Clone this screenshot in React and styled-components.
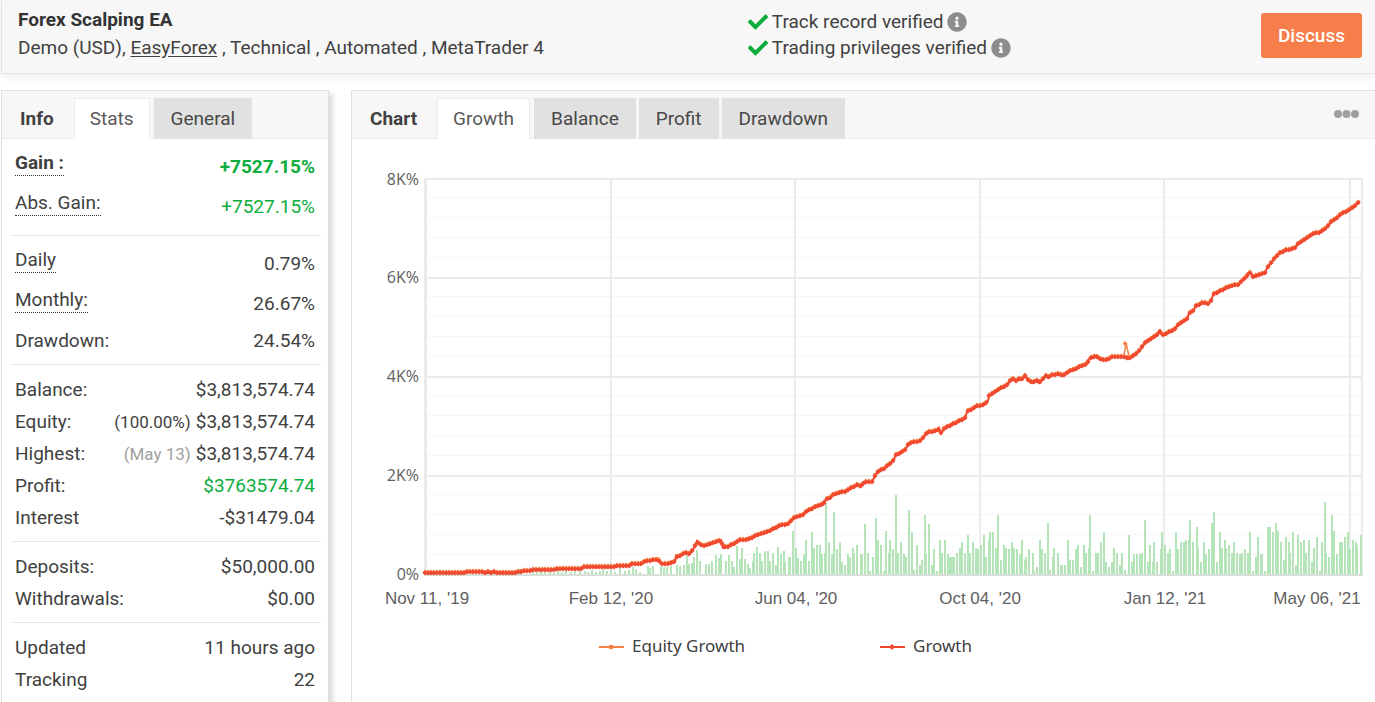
import React, { useState } from "react";
import styled, { createGlobalStyle } from "styled-components";
import { FaCheck, FaInfoCircle } from "react-icons/fa";

const GlobalStyle = createGlobalStyle`
* {
    box-sizing: border-box;
}
body {
    margin: 0;
    background: #fff;
    color: #414141;
    font-family: Roboto, sans-serif;
    font-size: 19px;
    line-height: 24px;
}
`

const Page = styled('div')`
height: 100vh;
padding-left: 1px;
overflow: hidden;
`

const Header = styled('header')`
display: grid;
grid-template-columns: 54.3% 1fr auto;
align-items: start;
height: 74px;
padding: 8px 13px 0 16px;
background: #f7f7f7;
border-left: 1px solid #e4e4e4;
border-bottom: 1px solid #e4e4e4;
box-shadow: 0 3px 8px rgba(0, 0, 0, 0.08);
`

const Title = styled('h1')`
margin: 0 0 4px;
font-size: 19px;
font-weight: 700;
line-height: 24px;
color: #333;
`

const Details = styled('p')`
margin: 0;
a {
    color: inherit;
    text-underline-offset: 2px;
}
`

const Verified = styled('ul')`
list-style: none;
margin: 0;
padding: 1px 0 0;
`

const VerifiedItem = styled('li')`
display: flex;
align-items: center;
gap: 4px;
height: 26px;
.check {
    color: #0cad3d;
}
.info {
    color: #8d8d8d;
}
`

const Discuss = styled('button')`
height: 45px;
margin-top: 5px;
padding: 0 17px;
border: 0;
border-radius: 3px;
background: #f77d4a;
color: #fff;
font: 500 19px Roboto, sans-serif;
`

const Columns = styled('main')`
display: grid;
grid-template-columns: 328px 1fr;
gap: 22px;
padding-top: 16px;
`

const Panel = styled('section')`
min-width: 0;
background: #fff;
border: 1px solid #e0e0e0;
border-right-width: ${props => props.$open ? "0" : "1px"};
box-shadow: ${props => props.$open ? "none" : "4px 4px 5px rgba(0, 0, 0, 0.14)"};
`

const TabBar = styled('div')`
display: flex;
align-items: flex-end;
gap: 3px;
height: 48px;
background: #f7f7f7;
box-shadow: inset 0 -1px 0 #ebebeb;
`

const BarTitle = styled('h2')`
margin: 0;
padding: 0 17px 0 18px;
font-size: 19px;
font-weight: 700;
line-height: 40px;
`

const Tab = styled('button')`
height: 41px;
margin-right: ${props => props.$active ? "1px" : "0"};
padding: 0 ${props => props.$active ? "15px" : "16px"} 1px;
border: 1px solid ${props => props.$active ? "#ebebeb" : "#e1e1e1"};
border-bottom: 0;
background: ${props => props.$active ? "#fff" : "#e1e1e1"};
color: ${props => props.$active ? "#5a5a5a" : "#484848"};
font: 400 19px Roboto, sans-serif;
`

const More = styled('button')`
display: flex;
align-self: center;
margin-left: auto;
padding: 0 16px 2px;
border: 0;
background: none;
`

const Group = styled('dl')`
margin: 0 7px 0 9px;
padding: 8px 6px 8px 4px;
border-bottom: 1px solid #e8e8e8;
`

const Row = styled('div')`
display: flex;
justify-content: space-between;
align-items: center;
height: ${props => props.$tall ? "40px" : "32px"};
padding-top: ${props => props.$tall ? "0" : "2px"};
font-weight: ${props => props.$bold ? 700 : 400};
`

const Label = styled('dt')`
align-self: ${props => props.$dotted ? "flex-start" : "center"};
padding-top: ${props => props.$dotted ? "4px" : "0"};
border-bottom: ${props => props.$dotted ? "1px dotted #333" : "0"};
`

const Value = styled('dd')`
margin: 0;
color: ${props => props.$green ? "#0cad3d" : "inherit"};
`

const Note = styled('span')`
margin-right: 5px;
font-size: 17px;
color: ${props => props.$muted ? "#a0a0a0" : "inherit"};
`

const Chart = styled('svg')`
display: block;
width: 100%;
height: auto;
`

const AxisText = styled('text')`
fill: #606060;
font: ${props => props.$y ? '16px "Open Sans", sans-serif' : '17px "Liberation Sans", sans-serif'};
text-anchor: ${props => props.$y ? "end" : "middle"};
`

const LegendText = styled('text')`
fill: #404040;
font: 17px "Noto Sans", sans-serif;
`

const groups = [
    [
        { label: "Gain :", value: "+7527.15%", dotted: true, green: true, bold: true },
        { label: "Abs. Gain:", value: "+7527.15%", dotted: true, green: true }
    ],
    [
        { label: "Daily", value: "0.79%", dotted: true },
        { label: "Monthly:", value: "26.67%", dotted: true },
        { label: "Drawdown:", value: "24.54%" }
    ],
    [
        { label: "Balance:", value: "$3,813,574.74" },
        { label: "Equity:", value: "$3,813,574.74", note: "(100.00%)" },
        { label: "Highest:", value: "$3,813,574.74", note: "(May 13)", muted: true },
        { label: "Profit:", value: "$3763574.74", green: true },
        { label: "Interest", value: "-$31479.04" }
    ],
    [
        { label: "Deposits:", value: "$50,000.00" },
        { label: "Withdrawals:", value: "$0.00" }
    ],
    [
        { label: "Updated", value: "11 hours ago" },
        { label: "Tracking", value: "22" }
    ]
];

// growth line, x,y
const growth = "424,573 465,573 467,572 482,572 484,573 488,572 492,573 494,572 497,573 515,573 517,572 530,571 533,570 552,570 556,569 580,569 585,567 614,567 617,566 628,566 632,564 641,564 645,561 658,560 661,564 667,564 675,562 676,556 678,557 684,553 689,554 693,550 697,541 699,544 705,546 712,543 721,540 723,548 730,546 740,540 748,540 755,536 767,532 782,525 788,524 795,517 803,515 805,512 817,506 823,505 826,499 830,498 833,495 841,492 845,492 853,487 858,485 861,487 864,482 872,482 876,474 880,470 883,470 894,460 895,456 905,450 909,443 920,441 928,432 937,431 939,428 941,433 945,428 965,418 967,412 977,406 984,405 988,401 989,396 993,393 1007,385 1012,379 1017,381 1020,378 1023,379 1025,376 1028,380 1033,383 1036,380 1039,383 1046,376 1048,378 1052,375 1058,374 1063,376 1068,372 1075,369 1087,364 1089,359 1096,356 1102,360 1108,360 1112,357 1125,357 1128,359 1132,357 1140,350 1145,343 1153,338 1157,335 1159,331 1162,335 1173,331 1178,325 1187,319 1189,313 1193,311 1196,306 1203,303 1208,304 1211,301 1213,295 1230,286 1238,285 1244,279 1246,278 1248,273 1251,273 1253,277 1265,273 1267,268 1272,262 1279,253 1287,250 1295,248 1297,245 1313,234 1321,232 1328,226 1332,221 1345,212 1350,210 1360,201"
    .split(" ").map(p => p.split(",").map(Number));

// bars under the line, x:height
const bars = "440:6 520:6 533:4 537:3 541:5 545:3 550:4 554:2 558:5 562:3 566:4 571:3 575:5 580:6 585:4 588:3 592:5 596:3 600:4 603:6 607:4 611:5 615:3 620:7 625:4 629:5 633:8 636:6 640:3 648:9 650:7 653:9 661:9 664:8 667:8 671:9 677:10 680:9 684:10 687:20 689:11 692:12 694:18 697:25 700:14 706:11 709:11 712:14 716:20 719:17 721:21 726:14 729:20 732:14 734:8 737:29 740:16 742:27 745:16 748:11 750:7 753:14 754:22 757:28 760:22 762:14 765:24 768:24 770:14 773:22 776:10 778:28 781:21 784:24 785:13 789:18 790:18 793:44 796:27 798:17 801:14 804:21 806:35 809:14 812:43 814:27 817:30 820:30 822:21 825:22 826:72 829:33 832:21 834:63 837:26 840:33 842:13 845:10 848:21 850:18 853:27 854:22 857:30 861:21 862:21 865:51 868:22 870:4 873:18 876:57 878:35 881:30 884:4 886:44 889:22 890:35 893:26 896:80 898:22 901:33 904:21 906:18 909:65 912:43 914:5 917:30 920:10 922:15 925:60 926:21 929:51 932:10 934:26 937:4 940:35 942:22 945:35 948:21 950:18 952:18 954:18 957:22 960:27 962:33 965:22 968:40 970:22 973:33 976:27 978:26 981:30 984:40 986:18 989:35 990:43 993:43 996:27 998:60 1001:15 1004:30 1006:27 1009:26 1012:33 1014:27 1017:26 1020:21 1022:35 1025:15 1026:18 1029:26 1033:22 1034:4 1037:8 1040:35 1042:26 1045:22 1048:52 1050:5 1053:18 1054:27 1058:22 1061:10 1062:10 1065:10 1068:35 1070:15 1073:15 1076:26 1078:30 1081:8 1084:30 1086:22 1089:27 1090:60 1093:4 1096:22 1098:22 1101:33 1104:43 1106:13 1109:8 1112:13 1114:27 1117:22 1120:10 1122:22 1125:5 1129:40 1132:13 1134:21 1137:21 1140:21 1142:22 1145:55 1148:13 1150:30 1153:13 1154:33 1157:13 1161:26 1162:43 1165:30 1168:22 1170:26 1173:4 1176:43 1178:26 1181:33 1184:33 1186:35 1189:35 1190:55 1193:33 1197:48 1198:27 1201:13 1204:33 1206:21 1209:26 1212:52 1214:63 1217:13 1220:43 1222:27 1225:35 1226:27 1229:30 1232:22 1234:33 1237:22 1240:21 1242:22 1245:26 1248:22 1250:43 1253:4 1256:18 1258:38 1261:21 1262:21 1265:4 1268:48 1270:48 1273:43 1276:52 1278:44 1281:33 1284:15 1286:38 1289:33 1290:22 1293:43 1296:10 1298:40 1301:33 1304:35 1306:22 1309:35 1312:13 1314:27 1317:38 1320:4 1322:33 1325:73 1326:22 1329:18 1332:60 1334:44 1337:21 1340:33 1342:33 1345:38 1348:43 1350:26 1353:35 1356:33 1357:30 1361:40"
    .split(" ").map(p => p.split(":").map(Number));

const yLabels = ["8K%", "6K%", "4K%", "2K%", "0%"];
const xLabels = [
    [427, "Nov 11, '19"],
    [611, "Feb 12, '20"],
    [796, "Jun 04, '20"],
    [980, "Oct 04, '20"],
    [1165, "Jan 12, '21"],
    [1317, "May 06, '21"]
];
const columns = [610, 794, 979, 1163, 1349];

const toPath = points => "M" + points.map(p => p.join(" ")).join("L");

// a diamond marker every few pixels along the line
const markers = (() => {
    let d = "";
    let i = 0;
    for (let x = 425; x <= 1360; x += 3) {
        while (growth[i + 1][0] < x) i++;
        const [x1, y1] = growth[i];
        const [x2, y2] = growth[i + 1];
        const y = Math.round(y1 + (y2 - y1) * (x - x1) / (x2 - x1));
        d += `M${x - 2.5} ${y}l2.5 -2.5l2.5 2.5l-2.5 2.5z`;
    }
    return d;
})();

const GrowthChart = () => (
    <Chart viewBox="352 139 1023 563" role="img" aria-label="Growth">
        <g shapeRendering="crispEdges">
            {Array.from({ length: 21 }, (_, i) => (
                <rect key={i} x="426" y={Math.round(177.5 + i * 19.8)} width="936"
                    height={i % 5 ? 1 : 2} fill={i % 5 ? "#f6f6f6" : "#ebebeb"} />
            ))}
            {columns.map(x => <rect key={x} x={x} y="178" width="2" height="397" fill="#ebebeb" />)}
            <rect x="424" y="178" width="3" height="398" fill="#ebebeb" />
            <rect x="1361" y="178" width="2" height="398" fill="#ebebeb" />
            {bars.map(([x, h]) => <rect key={x} x={x - 1} y={575 - h} width="2" height={h} fill="#b5e4b8" />)}
            <rect x="425" y="574" width="938" height="2" fill="#d9dfd9" />
        </g>

        <g transform="translate(0 -1)">
            <path d={markers} fill="#f58248" />
            <path d="M1124 357L1126 344L1129 357M1093 358L1095 355" fill="none" stroke="#f58248" strokeWidth="1.5" />
            <path d="M1122.500 344.500l2.500 -2.500l2.500 2.500l-2.500 2.500z" fill="#f58248" />
            <circle cx="658" cy="560" r="2" fill="#f58248" />
        </g>
        <path d={toPath(growth)} fill="none" stroke="#f0492f" strokeWidth="2" />
        <path d={markers} fill="#f0492f" />

        {yLabels.map((label, i) => (
            <AxisText key={label} $y x="419" y={185 + i * 99 - (i ? 1 : 0)}>{label}</AxisText>
        ))}
        {xLabels.map(([x, label]) => <AxisText key={label} x={x} y="604">{label}</AxisText>)}

        <path d="M599 647h25" stroke="#f58248" strokeWidth="2" />
        <rect x="609" y="645" width="4" height="4" fill="#f58248" />
        <LegendText x="632" y="652">Equity Growth</LegendText>
        <path d="M880 647h25" stroke="#f0492f" strokeWidth="2" />
        <path d="M889 647l3 -3l3 3l-3 3z" fill="#f0492f" />
        <LegendText x="913" y="652">Growth</LegendText>
    </Chart>
)

const Tabs = ({ title, names, children }) => {

    const [active, setActive] = useState(names[0]);

    return (
        <TabBar>
            <BarTitle>{title}</BarTitle>
            {names.map(name => (
                <Tab key={name} type="button" $active={name === active} onClick={() => setActive(name)}>{name}</Tab>
            ))}
            {children}
        </TabBar>
    )
}

const App = () => {
    return (
        <Page>
            <GlobalStyle />
            <Header>
                <div>
                    <Title>Forex Scalping EA</Title>
                    <Details>Demo (USD), <a href="#easyforex">EasyForex</a> , Technical , Automated , MetaTrader 4</Details>
                </div>
                <Verified>
                    <VerifiedItem><FaCheck className="check" size={20} />Track record verified <FaInfoCircle className="info" size={20} /></VerifiedItem>
                    <VerifiedItem><FaCheck className="check" size={20} />Trading privileges verified <FaInfoCircle className="info" size={20} /></VerifiedItem>
                </Verified>
                <Discuss type="button">Discuss</Discuss>
            </Header>

            <Columns>
                <Panel>
                    <Tabs title="Info" names={["Stats", "General"]} />
                    {groups.map((rows, i) => (
                        <Group key={i}>
                            {rows.map(row => (
                                <Row key={row.label} $tall={row.dotted} $bold={row.bold}>
                                    <Label $dotted={row.dotted}>{row.label}</Label>
                                    <Value $green={row.green}>
                                        {row.note && <Note $muted={row.muted}>{row.note}</Note>}
                                        {row.value}
                                    </Value>
                                </Row>
                            ))}
                        </Group>
                    ))}
                </Panel>

                <Panel $open>
                    <Tabs title="Chart" names={["Growth", "Balance", "Profit", "Drawdown"]}>
                        <More type="button" aria-label="More">
                            <svg width="25" height="8" viewBox="0 0 25 8" fill="#9f9f9f">
                                <circle cx="4" cy="4" r="4" />
                                <circle cx="12.500" cy="4" r="4" />
                                <circle cx="21" cy="4" r="4" />
                            </svg>
                        </More>
                    </Tabs>
                    <GrowthChart />
                </Panel>
            </Columns>
        </Page>
    )
}

export default App;
